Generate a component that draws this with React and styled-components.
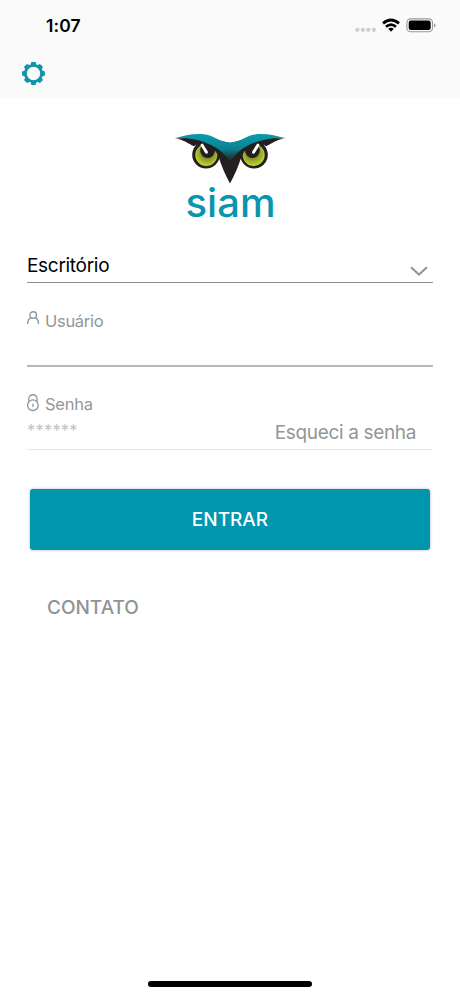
import React, { Component } from 'react';
import styled, { createGlobalStyle } from "styled-components";

const GlobalStyle = createGlobalStyle`
  * {
    box-sizing: border-box;
  }

  body {
    margin: 0;
    background: #fff;
    font-family: Inter, "Liberation Sans", sans-serif;
  }

  svg {
    display: block;
  }
`;

const Screen = styled.div`
  display: flex;
  flex-direction: column;
  width: 460px;
  height: 996px;
  overflow: hidden;
  background: #fff;
`;

const Header = styled.header`
  height: 98px;
  background: #fafafa;
`;

const StatusBar = styled.div`
  display: flex;
  justify-content: space-between;
  align-items: center;
  height: 51px;
  padding: 0 24px 0 46px;
`;

const Time = styled.span`
  font-size: 17.5px;
  font-weight: 600;
  letter-spacing: 0.1px;
  color: #000;
`;

const StatusIcons = styled.div`
  display: flex;
  align-items: center;
`;

const NavBar = styled.div`
  padding: 11px 22px;
`;

const SettingsButton = styled.button`
  display: block;
  padding: 0;
  border: 0;
  background: none;
`;

const LogoBlock = styled.div`
  display: flex;
  justify-content: center;
  height: 148px;
  padding-top: 32px;
`;

const Form = styled.form`
  display: flex;
  flex-direction: column;
  padding: 0 27px;
`;

const OfficeSelect = styled.div`
  display: flex;
  justify-content: space-between;
  height: 37px;
  padding: 8px 5px 0 0;
  border-bottom: 1px solid #8c8f8f;
  font-size: 19px;
  line-height: 24px;
  letter-spacing: -0.3px;
  color: #000;
`;

const Chevron = styled.svg`
  margin-top: 12px;
`;

const Field = styled.div`
  height: ${props => props.$height}px;
  margin-right: ${props => props.$inset || 0}px;
  padding-top: ${props => props.$top}px;
  border-bottom: ${props => props.$line};
`;

const FieldLabel = styled.label`
  display: flex;
  gap: 6px;
  height: 20px;
  font-size: 16.5px;
  line-height: 20px;
  letter-spacing: ${props => props.$spacing || 0}px;
  color: #929797;
`;

const PasswordRow = styled.div`
  display: flex;
  justify-content: space-between;
  height: 32px;
  padding: 5px 16px 0 0;
`;

const PasswordInput = styled.input`
  width: 160px;
  height: 22px;
  padding: 0;
  border: 0;
  outline: 0;
  background: none;
  font-family: Inter, sans-serif;
  font-size: 16.5px;
  letter-spacing: 0.2px;

  &::placeholder {
    color: #c3c5c5;
    opacity: 1;
  }
`;

const ForgotLink = styled.span`
  font-size: 19px;
  line-height: 28px;
  letter-spacing: -0.35px;
  white-space: nowrap;
  color: #929797;
`;

const SubmitBtn = styled.button`
  height: 61px;
  margin: 39px 3px 0;
  padding: 0;
  border: 0;
  border-radius: 3px;
  background: #0096ae;
  box-shadow: 0 0 3px rgba(0, 0, 0, 0.3);
  font-family: Inter, sans-serif;
  font-size: 19px;
  font-weight: 500;
  color: #fff;
`;

const ContactLink = styled.span`
  margin: 46px 0 0 20px;
  font-size: 19px;
  font-weight: 500;
  line-height: 24px;
  color: #8e9494;
`;

const HomeIndicator = styled.div`
  width: 164px;
  height: 6px;
  margin: auto auto 9px;
  border-radius: 3px;
  background: #000;
`;

const gearTeeth = [0, 45, 90, 135, 180, 225, 270, 315];

class Gear extends Component {
  render() {
    return (
      <svg width="23" height="23" viewBox="-11.5 -11.5 23 23" fill="#0f95aa">
        <circle r="8.1" fill="none" stroke="#0f95aa" strokeWidth="2.8" />
        {gearTeeth.map(angle => (
          <path key={angle} d="M-2.8-8.4 L-2.3-11 Q-2.2-11.4-1.8-11.4 H1.8 Q2.2-11.4 2.3-11 L2.8-8.4Z" transform={`rotate(${angle})`} />
        ))}
      </svg>
    );
  }
}

class PhoneStatus extends Component {
  render() {
    return (
      <StatusIcons>
        <svg width="81" height="18" viewBox="355 17 81 18">
          <g fill="#cdcdcd">
            <circle cx="357.4" cy="29.8" r="2.1" />
            <circle cx="362.9" cy="29.8" r="2.1" />
            <circle cx="368.4" cy="29.8" r="2.1" />
            <circle cx="373.9" cy="29.8" r="2.1" />
          </g>
          <g fill="none" stroke="#000" strokeWidth="2.7">
            <path d="M383 23.4 Q391 16.6 399 23.4" />
            <path d="M386 26.7 Q391 22.4 396 26.7" />
          </g>
          <path d="M388.2 28.8 Q391 26.6 393.8 28.8 L391 31.7Z" />
          <rect x="406.9" y="18.9" width="25.6" height="12.8" rx="3.7" fill="none" stroke="#999" strokeWidth="1.1" />
          <rect x="408.7" y="20.6" width="22" height="9.4" rx="2.2" />
          <path d="M434 23.2 Q435.6 24 435.6 25.3 Q435.6 26.6 434 27.4Z" fill="#999" />
        </svg>
      </StatusIcons>
    );
  }
}

class OwlEye extends Component {
  render() {
    return (
      <g>
        <circle cx="206" cy="154.8" r="13.8" fill="#231f20" />
        <circle cx="206.3" cy="155" r="11" fill="url(#iris)" />
        <circle cx="207.6" cy="150.6" r="7.4" fill="#231f20" />
      </g>
    );
  }
}

class Logo extends Component {
  render() {
    return (
      <svg width="130" height="108" viewBox="165 130 130 108">
        <defs>
          <radialGradient id="iris" cx="0.55" cy="0.4" r="0.62">
            <stop offset="0.4" stopColor="#7f8c2a" />
            <stop offset="0.95" stopColor="#c3d52d" />
          </radialGradient>
          <linearGradient id="brow" gradientUnits="userSpaceOnUse" x1="0" y1="134" x2="0" y2="161">
            <stop offset="0.1" stopColor="#0b97aa" />
            <stop offset="0.55" stopColor="#0a8292" />
            <stop offset="1" stopColor="#231f20" />
          </linearGradient>
        </defs>
        <OwlEye />
        <g transform="translate(460 0) scale(-1 1)">
          <OwlEye />
        </g>
        {/* dark mask running down to the beak */}
        <path
          d="M175 138.4 C184 139.3 188 143.6 194 146.2 C198 143.6 205 143.6 210.5 146.8 C215 149.5 217 153 218.8 157.5 C221.5 166 225 174 230 183.5 C235 174 238.5 166 241.2 157.5 C243 153 245 149.5 249.5 146.8 C255 143.6 262 143.6 266 146.2 C272 143.6 276 139.3 285 138.4 L254 137 L230 143 L206 137Z"
          fill="#231f20"
        />
        <path
          d="M174.3 138.2 C184 135.6 194 133 204 134.2 C215 135.6 219 142.4 230 142.4 C241 142.4 245 135.6 256 134.2 C266 133 276 135.6 285.7 138.2 C272 137.4 260 139.6 248 145.5 C240 149.5 234 155 230 162 C226 155 220 149.5 212 145.5 C200 139.6 188 137.4 174.3 138.2Z"
          fill="url(#brow)"
        />
        <path d="M202.1 145.2 L206.5 152.2 M257.9 145.2 L253.5 152.2" stroke="#fff" strokeWidth="3" strokeLinecap="round" />
        <text
          x="185.5"
          y="217"
          fontFamily="Inter, sans-serif"
          fontSize="39"
          fontWeight="450"
          textLength="90"
          lengthAdjust="spacingAndGlyphs"
          fill="#0995ad"
        >
          siam
        </text>
      </svg>
    );
  }
}

class App extends Component {
  render() {
    return (
      <Screen>
        <GlobalStyle />

        <Header>
          <StatusBar>
            <Time>1:07</Time>
            <PhoneStatus />
          </StatusBar>
          <NavBar>
            <SettingsButton type="button">
              <Gear />
            </SettingsButton>
          </NavBar>
        </Header>

        <LogoBlock>
          <Logo />
        </LogoBlock>

        <Form>
          <OfficeSelect>
            Escritório
            <Chevron width="18" height="11" fill="none" stroke="#929696" strokeWidth="2.1">
              <path d="M1 1.2 L9 8.6 L17 1.2" />
            </Chevron>
          </OfficeSelect>

          <Field $height={84} $top={28} $line="2px solid #b6b9b9">
            <FieldLabel $spacing={-0.3}>
              <svg width="12" height="13" fill="none" stroke="#929797" strokeWidth="1.4">
                <circle cx="6.2" cy="4" r="3.3" />
                <path d="M0.7 13 C0.7 9.3 2.4 7.3 4.2 6.8 M8.2 6.8 C10 7.3 11.5 9.3 11.5 13" />
              </svg>
              Usuário
            </FieldLabel>
          </Field>

          <Field $height={83} $top={27} $inset={1} $line="1px solid #e6e7e7">
            <FieldLabel $spacing={-0.25}>
              <svg width="12" height="18" fill="none" stroke="#929797" strokeWidth="1.3">
                <circle cx="5.9" cy="11.2" r="5.3" />
                <path d="M1.8 7.4 V4.8 C1.8 -0.6 10 -0.6 10 4.8 V7.4 M5.9 9.8 V13" />
              </svg>
              Senha
            </FieldLabel>
            <PasswordRow>
              <PasswordInput type="password" placeholder="******" />
              <ForgotLink>Esqueci a senha</ForgotLink>
            </PasswordRow>
          </Field>

          <SubmitBtn type="button">ENTRAR</SubmitBtn>
          <ContactLink>CONTATO</ContactLink>
        </Form>

        <HomeIndicator />
      </Screen>
    );
  }
}

export default App;
